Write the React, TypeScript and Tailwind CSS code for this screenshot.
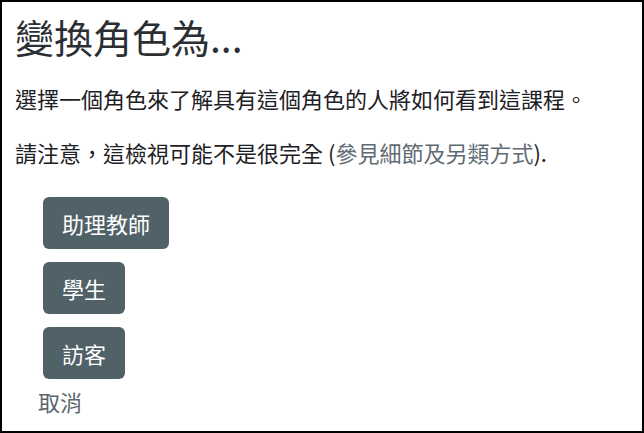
export default function App() {
  return (
    <div className="w-[644px] h-[433px] border-2 border-black bg-white text-[#1d2125] [font-family:'Noto_Sans_CJK_TC','Noto_Sans',sans-serif]">
      <div className="pt-[11px] pl-[13px]">
        <h2 className="text-[39px] leading-[46px] font-normal text-[#2b2f33]">變換角色為...</h2>
        <p className="mt-[23px] text-[22px] leading-[33px]">選擇一個角色來了解具有這個角色的人將如何看到這課程。</p>
        <p className="mt-[21px] text-[22px] leading-[33px]">
          請注意，這檢視可能不是很完全 (<a className="text-[#5f6b73]">參見細節及另類方式</a>).
        </p>
        <div className="mt-[28px] ml-[28px] flex flex-col items-start gap-[13px]">
          <button className="h-[52px] px-[19px] rounded-[6px] bg-[#516168] text-white text-[22px]">助理教師</button>
          <button className="h-[52px] px-[19px] rounded-[6px] bg-[#516168] text-white text-[22px]">學生</button>
          <button className="h-[52px] px-[19px] rounded-[6px] bg-[#516168] text-white text-[22px]">訪客</button>
        </div>
        <div className="mt-[6px] ml-[23px] text-[22px] leading-[33px] text-[#5a656c]">取消</div>
      </div>
    </div>
  );
}
